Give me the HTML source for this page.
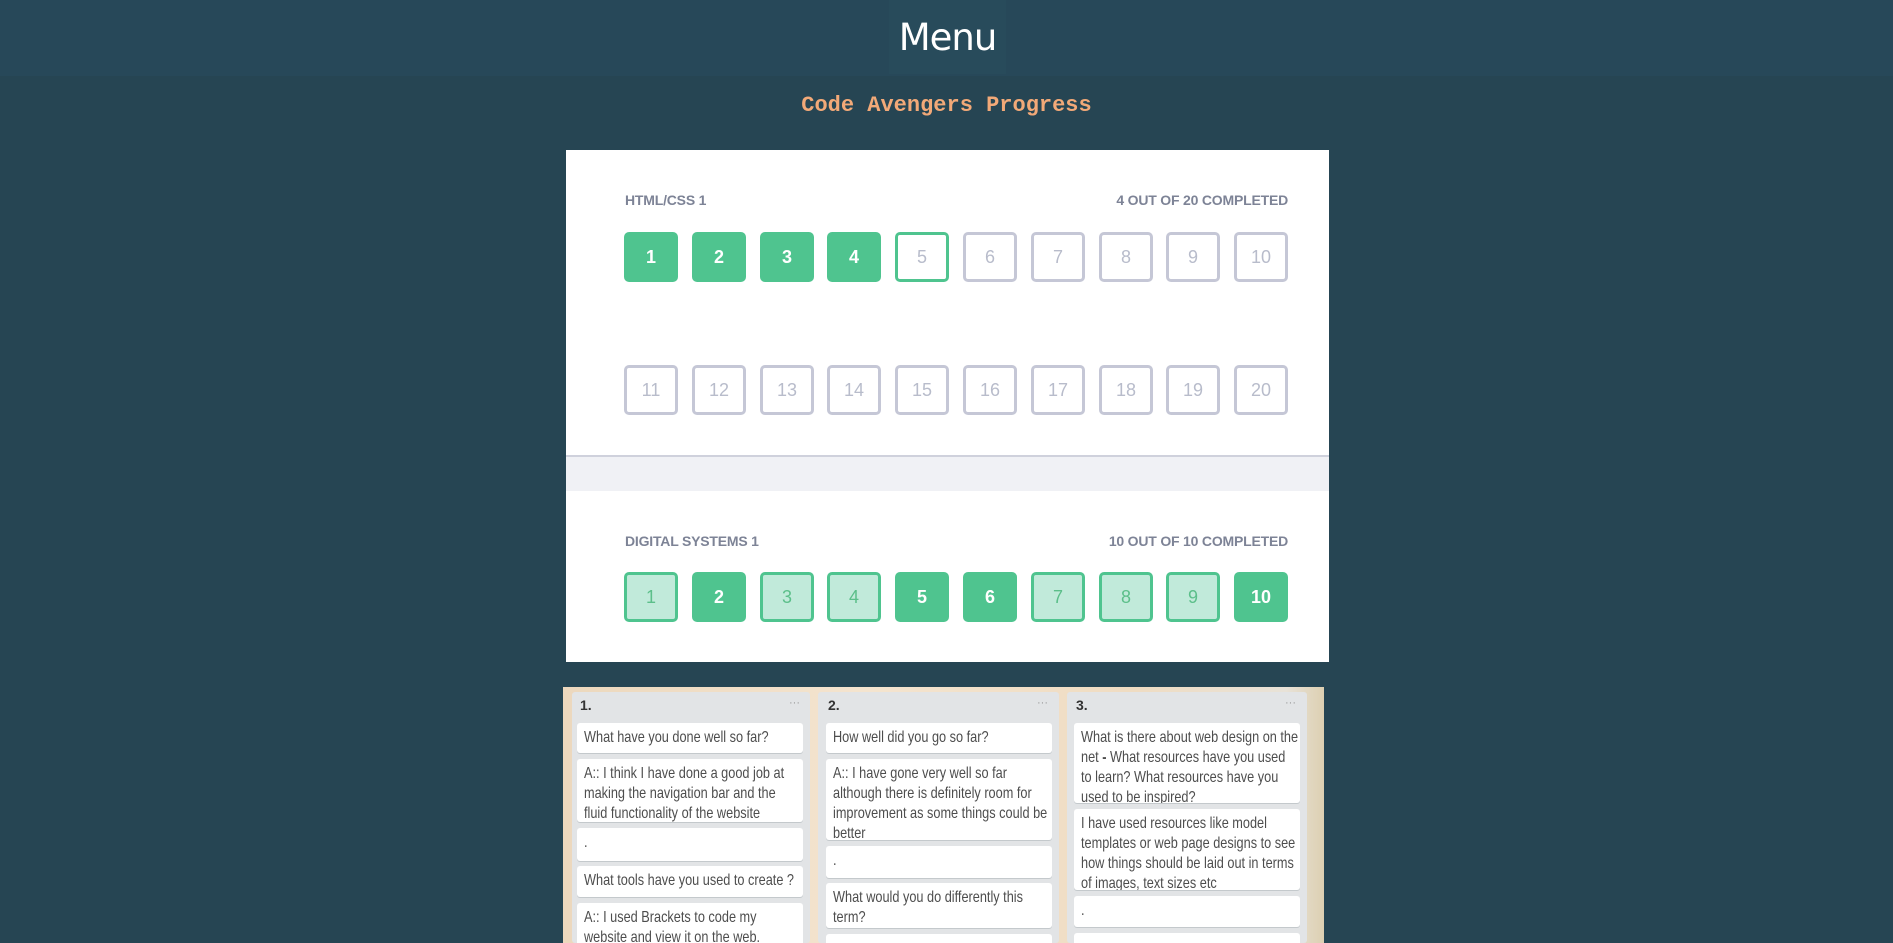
<!DOCTYPE html>
<html><head><meta charset="utf-8"><style>
*{margin:0;padding:0;box-sizing:border-box}
html,body{width:1893px;height:943px;overflow:hidden}
body{background:#264553;font-family:"Liberation Sans",sans-serif}
#w{position:relative;width:1893px;height:943px;overflow:hidden}
.hdr{position:absolute;left:0;top:0;width:1893px;height:76px;background:#274859}
.menu{position:absolute;left:889px;top:0;width:117px;height:74px;background:#284b5b;color:#fff;font-family:"Comic Sans MS","DejaVu Sans",sans-serif;font-size:37px;text-align:center;line-height:76px;letter-spacing:-1px}
.title{position:absolute;left:0;width:1893px;top:93px;text-align:center;color:#f2a978;font-family:"Liberation Mono",monospace;font-weight:bold;font-size:22px}
.box{position:absolute;left:566px;top:150px;width:763px;height:512px;background:#fff}
.band{position:absolute;left:0;top:305px;width:763px;height:36px;background:#f0f1f5;border-top:2px solid #cfd1dc}
.lbl{position:absolute;font-size:14px;font-weight:bold;color:#7d8396;letter-spacing:-0.2px}
.sq{position:absolute;width:54px;height:50px;border-radius:5px;border:3px solid #c5c7d6;color:#b8bccb;font-size:18px;text-align:center;line-height:44px}
.g{background:#4fc48f;border-color:#4fc48f;color:#fff;font-weight:bold}
.o{border-color:#4fc48f}
.l{background:#c1eada;border-color:#4fc48f;color:#5cbf8a}
.tr{position:absolute;left:563px;top:687px;width:761px;height:256px;background:linear-gradient(90deg,#ecd8bd,#f4e4cf 40%,#efdcc2 75%,#e8e2d8 95%,#ddd0b2)}
.col{position:absolute;top:692px;height:251px;background:#e2e4e6;border-radius:3px}
.ch{position:absolute;font-size:14px;font-weight:bold;color:#333}
.dots{position:absolute;font-size:11px;color:#999}
.cd{position:absolute;background:#fff;border-radius:3px;box-shadow:0 1px 0 #c4c9cc;color:#4d4d4d;padding:5px 7px;overflow:hidden}
.cd div{width:290px;white-space:nowrap;transform:scaleX(0.795);transform-origin:0 0;font-size:16px;line-height:20px}
</style></head><body><div id="w">
<div class="hdr"></div>
<div class="menu">Menu</div>
<div class="title">Code Avengers Progress</div>
<div class="box">
<div class="lbl" style="left:59px;top:42px">HTML/CSS 1</div>
<div class="lbl" style="right:41px;top:42px">4 OUT OF 20 COMPLETED</div>
<div class="sq g" style="left:58px;top:82px">1</div>
<div class="sq g" style="left:126px;top:82px">2</div>
<div class="sq g" style="left:194px;top:82px">3</div>
<div class="sq g" style="left:261px;top:82px">4</div>
<div class="sq o" style="left:329px;top:82px">5</div>
<div class="sq" style="left:397px;top:82px">6</div>
<div class="sq" style="left:465px;top:82px">7</div>
<div class="sq" style="left:533px;top:82px">8</div>
<div class="sq" style="left:600px;top:82px">9</div>
<div class="sq" style="left:668px;top:82px">10</div>
<div class="sq" style="left:58px;top:215px">11</div>
<div class="sq" style="left:126px;top:215px">12</div>
<div class="sq" style="left:194px;top:215px">13</div>
<div class="sq" style="left:261px;top:215px">14</div>
<div class="sq" style="left:329px;top:215px">15</div>
<div class="sq" style="left:397px;top:215px">16</div>
<div class="sq" style="left:465px;top:215px">17</div>
<div class="sq" style="left:533px;top:215px">18</div>
<div class="sq" style="left:600px;top:215px">19</div>
<div class="sq" style="left:668px;top:215px">20</div>
<div class="band"></div>
<div class="lbl" style="left:59px;top:383px">DIGITAL SYSTEMS 1</div>
<div class="lbl" style="right:41px;top:383px">10 OUT OF 10 COMPLETED</div>
<div class="sq l" style="left:58px;top:422px">1</div>
<div class="sq g" style="left:126px;top:422px">2</div>
<div class="sq l" style="left:194px;top:422px">3</div>
<div class="sq l" style="left:261px;top:422px">4</div>
<div class="sq g" style="left:329px;top:422px">5</div>
<div class="sq g" style="left:397px;top:422px">6</div>
<div class="sq l" style="left:465px;top:422px">7</div>
<div class="sq l" style="left:533px;top:422px">8</div>
<div class="sq l" style="left:600px;top:422px">9</div>
<div class="sq g" style="left:668px;top:422px">10</div>
</div>
<div class="tr"></div>
<div class="col" style="left:572px;width:238px"></div>
<div class="col" style="left:818px;width:241px"></div>
<div class="col" style="left:1067px;width:240px"></div>
<div class="ch" style="left:580px;top:697px">1.</div><div class="dots" style="left:789px;top:697px">···</div>
<div class="ch" style="left:828px;top:697px">2.</div><div class="dots" style="left:1037px;top:697px">···</div>
<div class="ch" style="left:1076px;top:697px">3.</div><div class="dots" style="left:1285px;top:697px">···</div>
<div class="cd" style="left:577px;top:723px;width:226px;height:30px"><div>What have you done well so far?</div></div>
<div class="cd" style="left:577px;top:759px;width:226px;height:63px"><div>A:: I think I have done a good job at<br>making the navigation bar and the<br>fluid functionality of the website</div></div>
<div class="cd" style="left:577px;top:828px;width:226px;height:33px"><div>.</div></div>
<div class="cd" style="left:577px;top:866px;width:226px;height:31px"><div>What tools have you used to create ?</div></div>
<div class="cd" style="left:577px;top:903px;width:226px;height:60px"><div>A:: I used Brackets to code my<br>website and view it on the web.</div></div>
<div class="cd" style="left:826px;top:723px;width:226px;height:30px"><div>How well did you go so far?</div></div>
<div class="cd" style="left:826px;top:759px;width:226px;height:81px"><div>A:: I have gone very well so far<br>although there is definitely room for<br>improvement as some things could be<br>better</div></div>
<div class="cd" style="left:826px;top:846px;width:226px;height:32px"><div>.</div></div>
<div class="cd" style="left:826px;top:883px;width:226px;height:45px"><div>What would you do differently this<br>term?</div></div>
<div class="cd" style="left:826px;top:934px;width:226px;height:30px"></div>
<div class="cd" style="left:1074px;top:723px;width:226px;height:80px"><div>What is there about web design on the<br>net <b>-</b> What resources have you used<br>to learn? What resources have you<br>used to be inspired?</div></div>
<div class="cd" style="left:1074px;top:809px;width:226px;height:81px"><div>I have used resources like model<br>templates or web page designs to see<br>how things should be laid out in terms<br>of images, text sizes etc</div></div>
<div class="cd" style="left:1074px;top:896px;width:226px;height:31px"><div>.</div></div>
<div class="cd" style="left:1074px;top:933px;width:226px;height:30px"></div>
</div></body></html>
